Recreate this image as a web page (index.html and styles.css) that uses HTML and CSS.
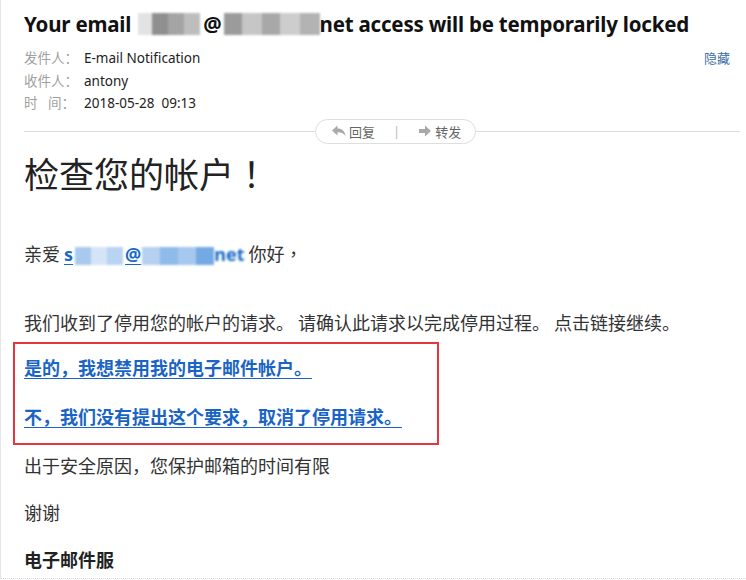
FILE: index.html
```html
<!DOCTYPE html>
<html>
<head>
    <meta charset="UTF-8">
    <title>Your email access will be temporarily locked</title>
    <link rel="stylesheet" href="styles.css">
</head>
<body>
    <div class="mail">
        <h1 class="subject">Your email <span class="redact r-title1"><i></i><i></i><i></i><i></i></span>@<span class="redact r-title2"><i></i><i></i><i></i><i></i><i></i></span>net access will be temporarily locked</h1>

        <div class="meta">
            <div class="meta-rows">
                <div class="row"><span class="label">发件人：</span><span class="value">E-mail Notification</span></div>
                <div class="row"><span class="label">收件人：</span><span class="value">antony</span></div>
                <div class="row"><span class="label">时&nbsp;&nbsp;&nbsp;间：</span><span class="value">2018-05-28&nbsp;&nbsp;09:13</span></div>
            </div>
            <a class="hide" href="#">隐藏</a>
        </div>

        <div class="toolbar">
            <span class="line"></span>
            <div class="pill">
                <span class="btn">
                    <svg width="14" height="12" viewBox="0 0 14 12"><path d="M0 5.5 L5.5 0.5 V3.5 C10 3.5 13 6 13.5 11 C11.5 8 9 7.2 5.5 7.2 V10.5 Z" fill="#a9a9a9"/></svg>
                    回复
                </span>
                <span class="sep">|</span>
                <span class="btn">
                    <svg width="14" height="12" viewBox="0 0 14 12"><path d="M1 4 H7 V0.5 L13 6 L7 11.5 V8 H1 Z" fill="#a9a9a9"/></svg>
                    转发
                </span>
            </div>
            <span class="line"></span>
        </div>

        <div class="content">
            <h2>检查您的帐户<span class="punct">！</span></h2>
            <p class="greet">亲爱 <a class="addr" href="#">s<span class="redact r-addr1"><i></i><i></i><i></i></span>@<span class="redact r-addr2"><i></i><i></i><i></i><i></i></span><span class="blurtext">net</span></a> 你好<span class="punct">，</span></p>
            <p class="msg first">我们收到了停用您的帐户的请求。 请确认此请求以完成停用过程。 点击链接继续。</p>
            <div class="choices">
                <p><a href="#">是的，我想禁用我的电子邮件帐户。</a></p>
                <p><a href="#">不，我们没有提出这个要求，取消了停用请求。</a></p>
            </div>
            <p class="msg after-box">出于安全原因，您保护邮箱的时间有限</p>
            <p class="msg">谢谢</p>
            <p class="msg sign">电子邮件服</p>
        </div>
    </div>
</body>
</html>
```

FILE: styles.css
```css
body {
    margin: 0;
    background: #fff;
    font-family: "Noto Sans", "Noto Sans CJK SC", sans-serif;
    color: #333;
}
.mail {
    border-left: 1px solid #e6e6e6;
    border-bottom: 1px dotted #d8d8d8;
    height: 579px;
    box-sizing: border-box;
    overflow: hidden;
}
.subject {
    margin: 0;
    padding: 9px 0 0 23px;
    font-size: 20.5px;
    line-height: 30px;
    font-weight: bold;
    color: #111;
    letter-spacing: -0.2px;
    white-space: nowrap;
}

/* blurred redactions */
.redact {
    display: inline-flex;
    vertical-align: middle;
    filter: blur(1.2px);
}
.redact i {
    display: block;
    height: 100%;
}
.r-title1 {
    width: 62px;
    height: 22px;
    margin: 0 3px 0 2px;
    position: relative;
    top: -2px;
}
.r-title1 i:nth-child(1) { width: 14px; background: #e3e3e3; }
.r-title1 i:nth-child(2) { width: 16px; background: #8f8f8f; }
.r-title1 i:nth-child(3) { width: 16px; background: #a4a4a4; }
.r-title1 i:nth-child(4) { width: 16px; background: #bdbdbd; }
.r-title2 {
    width: 96px;
    height: 22px;
    margin: 0 0 0 2px;
    position: relative;
    top: -2px;
}
.r-title2 i:nth-child(1) { width: 18px; background: #9b9b9b; }
.r-title2 i:nth-child(2) { width: 20px; background: #c6c6c6; }
.r-title2 i:nth-child(3) { width: 18px; background: #a8a8a8; }
.r-title2 i:nth-child(4) { width: 20px; background: #cdcdcd; }
.r-title2 i:nth-child(5) { width: 20px; background: #b3b3b3; }

.meta {
    display: flex;
    justify-content: space-between;
    padding: 8px 16px 0 23px;
}
.meta .row {
    font-size: 13.5px;
    line-height: 22.5px;
    height: 22.5px;
}
.label {
    display: inline-block;
    width: 60px;
    color: #a0a0a0;
}
.value {
    color: #222;
}
.hide {
    font-size: 13px;
    line-height: 22.5px;
    color: #3c6ea8;
    text-decoration: none;
}

.toolbar {
    display: flex;
    align-items: center;
    margin: 4px 6px 0 23px;
    height: 25px;
}
.toolbar .line {
    flex: 1;
    height: 1px;
    background: #dcdcdc;
}
.toolbar .line:first-child {
    flex: 0 0 291px;
}
.pill {
    display: flex;
    align-items: center;
    gap: 10px;
    height: 23px;
    padding: 0 14px 0 16px;
    border: 1px solid #dedede;
    border-radius: 13px;
    font-size: 13px;
    color: #666;
    background: #fff;
}
.pill .btn {
    display: flex;
    align-items: center;
    gap: 3px;
}
.pill .sep {
    color: #bbb;
    margin: 0 8px;
}

.content {
    padding: 0 0 0 23px;
}
.content h2 {
    margin: 6px 0 0 0;
    font-size: 35px;
    line-height: 46px;
    font-weight: normal;
    color: #222;
    font-family: "Noto Sans CJK SC", sans-serif;
}
.punct {
    font-family: "Noto Sans CJK TC", sans-serif;
}
.content p {
    margin: 0;
    font-size: 18px;
    line-height: 27px;
    font-family: "Noto Sans CJK SC", sans-serif;
}
.content .greet {
    margin-top: 44px;
}
.addr {
    color: #1769c9;
    font-weight: bold;
    font-family: "Noto Sans", sans-serif;
    text-decoration: underline;
    text-underline-offset: 3px;
}
.r-addr1 {
    width: 48px;
    height: 18px;
    margin: 0 2px;
}
.r-addr1 i:nth-child(1) { width: 16px; background: #a9c9ef; }
.r-addr1 i:nth-child(2) { width: 16px; background: #d5e4f6; }
.r-addr1 i:nth-child(3) { width: 16px; background: #b9d3f2; }
.r-addr2 {
    width: 72px;
    height: 18px;
    margin-left: 1px;
}
.r-addr2 i:nth-child(1) { width: 18px; background: #b5d0f0; }
.r-addr2 i:nth-child(2) { width: 18px; background: #8ebbea; }
.r-addr2 i:nth-child(3) { width: 18px; background: #a7c8ee; }
.r-addr2 i:nth-child(4) { width: 18px; background: #74aae4; }
.blurtext {
    display: inline-block;
    filter: blur(1px);
}
.content .msg {
    margin-top: 20px;
}
.content .msg.first {
    margin-top: 41px;
}
.choices {
    margin: 6px 0 0 -11px;
    width: 413px;
    padding: 10px 0 13px 9px;
    border: 2px solid #e8343f;
}
.choices p + p {
    margin-top: 22px;
}
.choices a {
    color: #1a64c4;
    font-weight: bold;
    text-decoration: underline;
    text-underline-offset: 3px;
}
.content .msg.after-box {
    margin-top: 7px;
}
.sign {
    font-weight: bold;
    color: #222;
}
```
